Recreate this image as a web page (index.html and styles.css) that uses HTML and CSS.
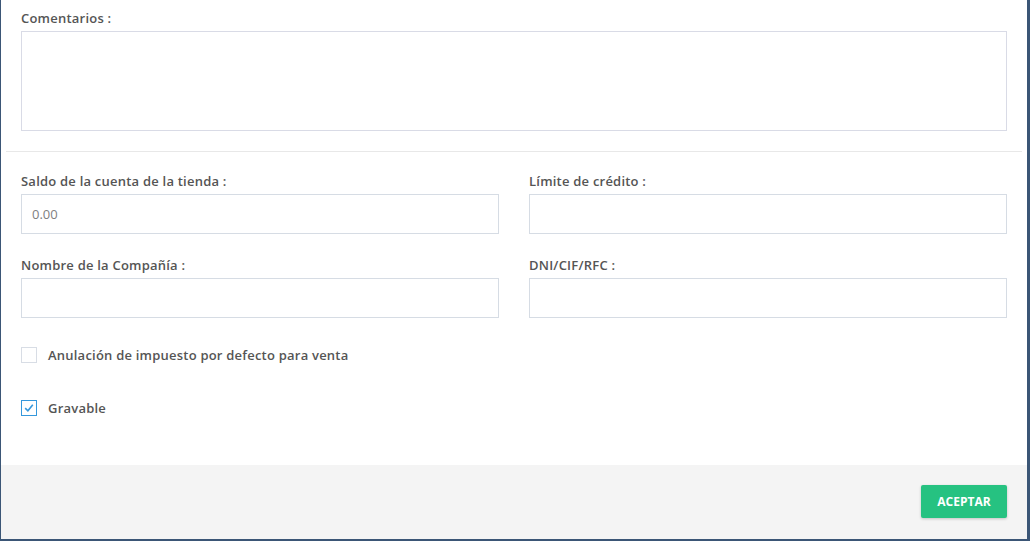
FILE: index.html
```html
<!DOCTYPE html>
<html lang="es">

<head>
  <meta charset="UTF-8">
  <meta name="viewport" content="width=device-width, initial-scale=1.0">
  <title>Cliente</title>
  <link rel="stylesheet" href="styles.css">
</head>

<body>
  <div class="modal">
    <div class="modal-body">
      <div class="section">
        <label class="field-label">Comentarios :</label>
        <textarea class="field-area"></textarea>
      </div>

      <div class="divider"></div>

      <div class="section">
        <div class="form-row">
          <div class="form-group">
            <label class="field-label">Saldo de la cuenta de la tienda :</label>
            <input type="text" class="field-input" value="0.00">
          </div>
          <div class="form-group">
            <label class="field-label">Límite de crédito :</label>
            <input type="text" class="field-input">
          </div>
        </div>
        <div class="form-row">
          <div class="form-group">
            <label class="field-label">Nombre de la Compañía :</label>
            <input type="text" class="field-input">
          </div>
          <div class="form-group">
            <label class="field-label">DNI/CIF/RFC :</label>
            <input type="text" class="field-input">
          </div>
        </div>

        <div class="check-row">
          <span class="check-box"></span>
          <span class="check-label">Anulación de impuesto por defecto para venta</span>
        </div>
        <div class="check-row">
          <span class="check-box checked">
            <svg width="12" height="12" viewBox="0 0 12 12">
              <path d="M2.2 6.2 L4.9 8.8 L9.8 2.8" fill="none" stroke="#3598dc" stroke-width="1.6" />
            </svg>
          </span>
          <span class="check-label">Gravable</span>
        </div>
      </div>
    </div>

    <div class="modal-footer">
      <button class="accept-button">ACEPTAR</button>
    </div>
  </div>
</body>

</html>
```

FILE: styles.css
```css
body {
  margin: 0;
  background-color: #3b5676;
  font-family: 'Open Sans', 'Liberation Sans', sans-serif;
  color: #555;
  width: 1030px;
  height: 541px;
  overflow: hidden;
}

.modal {
  margin-left: 1px;
  width: 1026px;
  height: 539px;
  background-color: #fff;
  display: flex;
  flex-direction: column;
}

.modal-body {
  flex: 1;
}

.section {
  padding: 9px 20px 0 20px;
}

.field-label {
  display: block;
  font-size: 13px;
  font-weight: 600;
  letter-spacing: 0.22px;
  line-height: 18px;
  margin-bottom: 4px;
  color: #555;
}

.field-area {
  display: block;
  box-sizing: border-box;
  width: 100%;
  height: 100px;
  border: 1px solid #d9dbe6;
  resize: none;
  margin: 0;
}

.divider {
  height: 1px;
  background-color: #e8e8e8;
  margin: 20px 5px 11px 5px;
}

.form-row {
  display: flex;
  gap: 30px;
  margin-bottom: 22px;
}

.form-group {
  flex: 1;
}

.field-input {
  display: block;
  box-sizing: border-box;
  width: 100%;
  height: 40px;
  margin: 0;
  padding: 0 10px;
  border: 1px solid #d6dce4;
  font-family: 'Open Sans', 'Liberation Sans', sans-serif;
  font-size: 13px;
  color: #808080;
  outline: none;
}

.check-row {
  display: flex;
  align-items: center;
  gap: 11px;
  margin-top: 29px;
  height: 16px;
}

.check-row + .check-row {
  margin-top: 37px;
}

.check-box {
  box-sizing: border-box;
  width: 16px;
  height: 16px;
  border: 1px solid #d8dde5;
  display: flex;
  align-items: center;
  justify-content: center;
}

.check-box.checked {
  border-color: #3598dc;
}

.check-label {
  font-size: 13px;
  font-weight: 600;
  letter-spacing: 0.22px;
  color: #555;
}

.modal-footer {
  height: 74px;
  background-color: #f4f4f4;
  display: flex;
  justify-content: flex-end;
  align-items: flex-start;
  padding: 20px 20px 0 0;
  box-sizing: border-box;
}

.accept-button {
  background-color: #26c281;
  border: none;
  color: white;
  font-family: 'Open Sans', 'Liberation Sans', sans-serif;
  font-weight: 700;
  font-size: 12px;
  width: 86px;
  height: 33px;
  border-radius: 2px;
  box-shadow: 0 1px 3px rgba(0, 0, 0, 0.2);
  cursor: pointer;
}
```
